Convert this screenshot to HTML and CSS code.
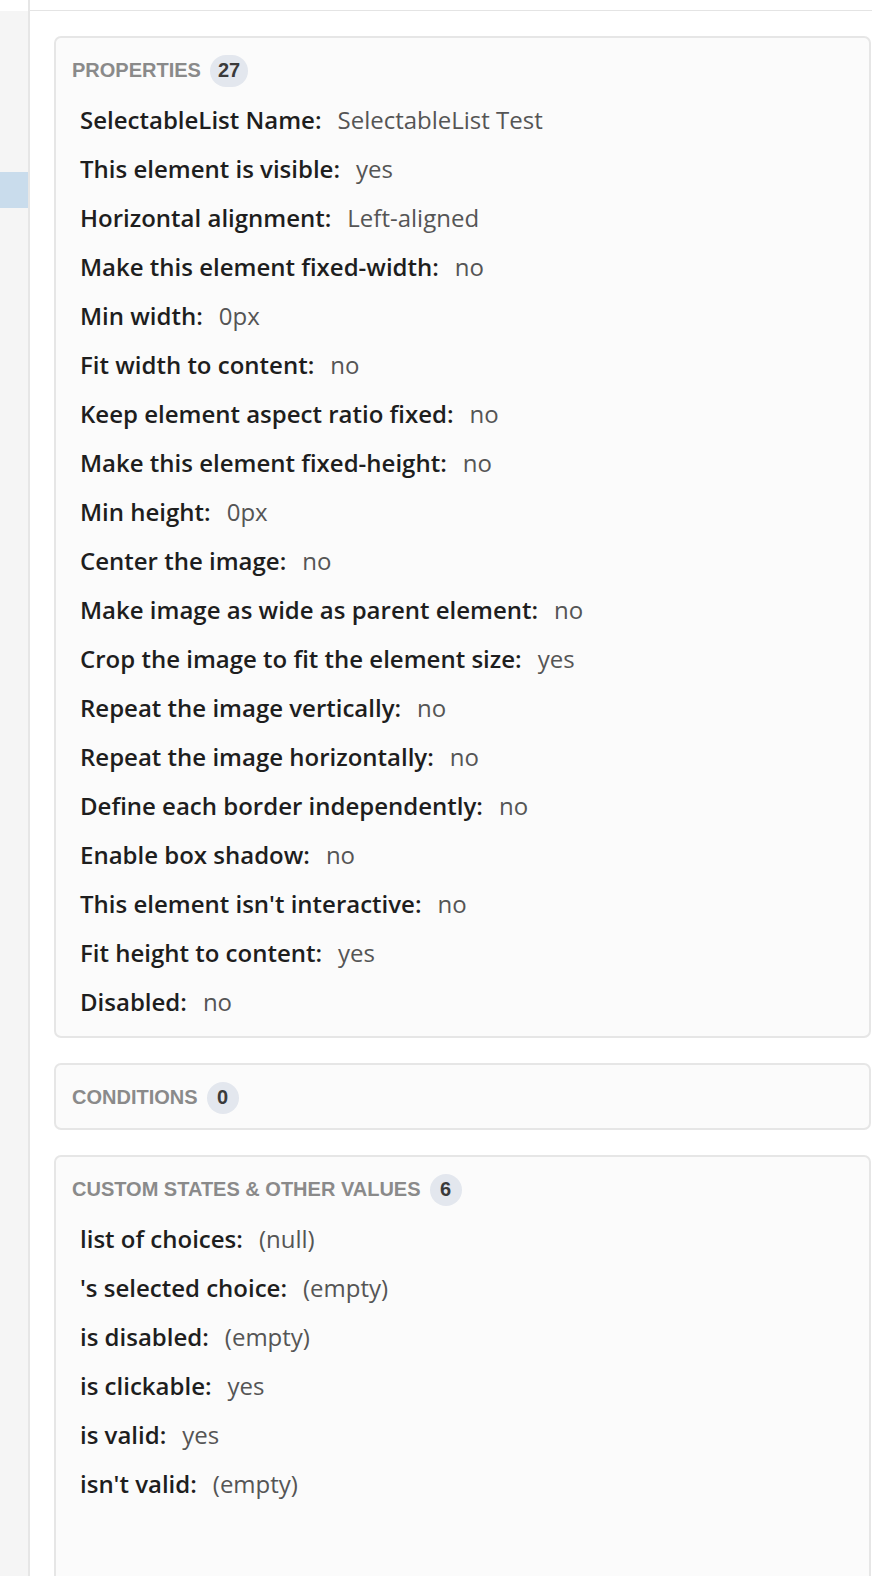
FILE: index.html
```html
<!DOCTYPE html>
<html>
<head>
<meta charset="utf-8">
<link rel="stylesheet" href="styles.css">
</head>
<body>
<div class="app">
  <aside class="sidebar">
    <div class="side-top"></div>
    <div class="side-body">
      <div class="side-item active"></div>
    </div>
  </aside>
  <main class="main">
    <div class="topbar"></div>
    <div class="content">
      <section class="card">
        <header class="card-head"><span class="card-title">PROPERTIES</span><span class="badge">27</span></header>
        <div class="rows">
          <div class="row"><span class="label">SelectableList Name:</span><span class="value">SelectableList Test</span></div>
          <div class="row"><span class="label">This element is visible:</span><span class="value">yes</span></div>
          <div class="row"><span class="label">Horizontal alignment:</span><span class="value">Left-aligned</span></div>
          <div class="row"><span class="label">Make this element fixed-width:</span><span class="value">no</span></div>
          <div class="row"><span class="label">Min width:</span><span class="value">0px</span></div>
          <div class="row"><span class="label">Fit width to content:</span><span class="value">no</span></div>
          <div class="row"><span class="label">Keep element aspect ratio fixed:</span><span class="value">no</span></div>
          <div class="row"><span class="label">Make this element fixed-height:</span><span class="value">no</span></div>
          <div class="row"><span class="label">Min height:</span><span class="value">0px</span></div>
          <div class="row"><span class="label">Center the image:</span><span class="value">no</span></div>
          <div class="row"><span class="label">Make image as wide as parent element:</span><span class="value">no</span></div>
          <div class="row"><span class="label">Crop the image to fit the element size:</span><span class="value">yes</span></div>
          <div class="row"><span class="label">Repeat the image vertically:</span><span class="value">no</span></div>
          <div class="row"><span class="label">Repeat the image horizontally:</span><span class="value">no</span></div>
          <div class="row"><span class="label">Define each border independently:</span><span class="value">no</span></div>
          <div class="row"><span class="label">Enable box shadow:</span><span class="value">no</span></div>
          <div class="row"><span class="label">This element isn't interactive:</span><span class="value">no</span></div>
          <div class="row"><span class="label">Fit height to content:</span><span class="value">yes</span></div>
          <div class="row"><span class="label">Disabled:</span><span class="value">no</span></div>
        </div>
      </section>
      <section class="card compact">
        <header class="card-head"><span class="card-title">CONDITIONS</span><span class="badge">0</span></header>
      </section>
      <section class="card tall">
        <header class="card-head"><span class="card-title">CUSTOM STATES &amp; OTHER VALUES</span><span class="badge">6</span></header>
        <div class="rows">
          <div class="row"><span class="label">list of choices:</span><span class="value">(null)</span></div>
          <div class="row"><span class="label">'s selected choice:</span><span class="value">(empty)</span></div>
          <div class="row"><span class="label">is disabled:</span><span class="value">(empty)</span></div>
          <div class="row"><span class="label">is clickable:</span><span class="value">yes</span></div>
          <div class="row"><span class="label">is valid:</span><span class="value">yes</span></div>
          <div class="row"><span class="label">isn't valid:</span><span class="value">(empty)</span></div>
        </div>
      </section>
    </div>
  </main>
</div>
</body>
</html>
```
FILE: styles.css
```css
html, body {
  margin: 0;
  padding: 0;
  background: #ffffff;
  overflow: hidden;
}

.app {
  display: flex;
  height: 1576px;
  overflow: hidden;
}

.sidebar {
  width: 28px;
  flex: none;
  display: flex;
  flex-direction: column;
  border-right: 2px solid #e6e6e6;
}

.side-top {
  height: 11px;
  background: #ffffff;
}

.side-body {
  flex: 1;
  background: #f5f5f5;
  padding-top: 161px;
}

.side-item {
  height: 36px;
}

.side-item.active {
  background: #c9dcec;
}

.main {
  flex: 1;
  min-width: 0;
  display: flex;
  flex-direction: column;
}

.topbar {
  height: 10px;
  border-bottom: 1px solid #e4e4e4;
  flex: none;
}

.content {
  padding: 25px 1px 0 24px;
  display: flex;
  flex-direction: column;
  gap: 25px;
}

.card {
  border: 2px solid #e6e6e6;
  border-radius: 7px;
  background: #fbfbfb;
  padding: 17px 16px 10px 16px;
}

.card.compact {
  padding-bottom: 15px;
}

.card.tall {
  padding-bottom: 200px;
}

.card-head {
  display: flex;
  align-items: center;
  height: 31px;
}

.card-title {
  font-family: "Liberation Sans", Arial, sans-serif;
  font-weight: 700;
  font-size: 20px;
  color: #8a8a8a;
}

.badge {
  margin-left: 9px;
  min-width: 32px;
  height: 32px;
  box-sizing: border-box;
  padding: 0 8px;
  border-radius: 16px;
  background: #e3e7ee;
  color: #3a3a3a;
  font-family: "Liberation Sans", Arial, sans-serif;
  font-weight: 700;
  font-size: 20px;
  display: flex;
  align-items: center;
  justify-content: center;
}

.rows {
  margin-top: 9px;
  padding-left: 8px;
}

.row {
  height: 49px;
  display: flex;
  align-items: center;
  font-family: "Open Sans", sans-serif;
  font-size: 24px;
  white-space: nowrap;
}

.label {
  font-weight: 600;
  color: #1e1e1e;
}

.value {
  margin-left: 16px;
  font-weight: 400;
  color: #555555;
}
```
